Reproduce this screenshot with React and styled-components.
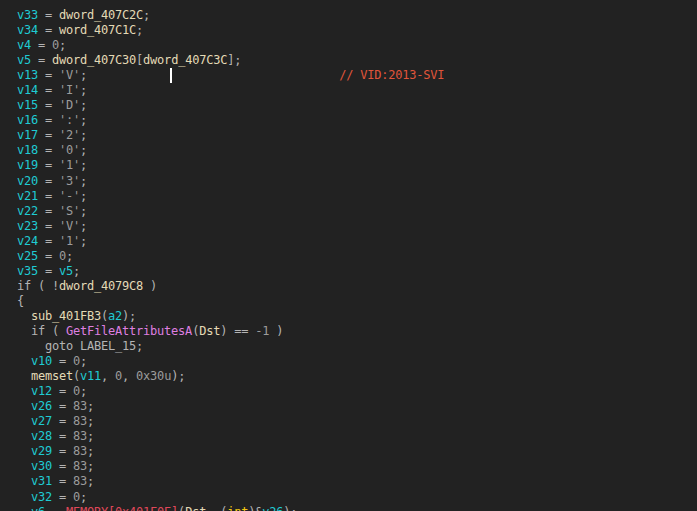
import React from "react";
import styled, { createGlobalStyle } from "styled-components";

const GlobalStyle = createGlobalStyle`
  html, body {
    margin: 0;
    padding: 0;
    background: #222222;
    overflow: hidden;
  }
`;

const Editor = styled.div`
  width: 697px;
  height: 511px;
  overflow: hidden;
  box-sizing: border-box;
  padding: 8px 0 0 17px;
  background: #222222;
  font-family: "DejaVu Sans Mono", "Liberation Mono", monospace;
  font-size: 12px;
  letter-spacing: -0.22px;
  color: #b4b4b4;
`;

const Line = styled.div`
  height: 15.06px;
  line-height: 15.06px;
  white-space: pre;
  padding-left: ${(p) => p.$indent * 7}px;
`;

const colors = {
  v: "#1fcbd3",
  n: "#9c9c9c",
  p: "#b4b4b4",
  g: "#e4dab6",
  f: "#df7fe0",
  c: "#e0553a",
  m: "#e0485a",
  k: "#f2c811",
};

const Tok = styled.span`
  color: ${(p) => colors[p.$kind]};
`;

const Caret = styled.span`
  display: inline-block;
  width: 2px;
  height: 15px;
  margin: 0 -1px;
  vertical-align: top;
  background: #ffffff;
`;

const v = (t) => ["v", t];
const n = (t) => ["n", t];
const p = (t) => ["p", t];
const g = (t) => ["g", t];

const assignChar = (name, ch) => [v(name), p(" = "), n(`'${ch}'`), p(";")];
const assignNum = (name, num) => [v(name), p(" = "), n(num), p(";")];

const lines = [
  [0, [v("v33"), p(" = "), g("dword_407C2C"), p(";")]],
  [0, [v("v34"), p(" = "), g("word_407C1C"), p(";")]],
  [0, assignNum("v4", "0")],
  [0, [v("v5"), p(" = "), g("dword_407C30"), p("["), g("dword_407C3C"), p("];")]],
  [0, [...assignChar("v13", "V"), p("            "), ["caret", ""], p("                        "), ["c", "// VID:2013-SVI"]]],
  [0, assignChar("v14", "I")],
  [0, assignChar("v15", "D")],
  [0, assignChar("v16", ":")],
  [0, assignChar("v17", "2")],
  [0, assignChar("v18", "0")],
  [0, assignChar("v19", "1")],
  [0, assignChar("v20", "3")],
  [0, assignChar("v21", "-")],
  [0, assignChar("v22", "S")],
  [0, assignChar("v23", "V")],
  [0, assignChar("v24", "1")],
  [0, assignNum("v25", "0")],
  [0, [v("v35"), p(" = "), v("v5"), p(";")]],
  [0, [p("if ( !"), g("dword_4079C8"), p(" )")]],
  [0, [p("{")]],
  [2, [g("sub_401FB3"), p("("), v("a2"), p(");")]],
  [2, [p("if ( "), ["f", "GetFileAttributesA"], p("("), g("Dst"), p(") == "), n("-1"), p(" )")]],
  [4, [p("goto LABEL_15;")]],
  [2, assignNum("v10", "0")],
  [2, [g("memset"), p("("), v("v11"), p(", "), n("0"), p(", "), n("0x30u"), p(");")]],
  [2, assignNum("v12", "0")],
  [2, assignNum("v26", "83")],
  [2, assignNum("v27", "83")],
  [2, assignNum("v28", "83")],
  [2, assignNum("v29", "83")],
  [2, assignNum("v30", "83")],
  [2, assignNum("v31", "83")],
  [2, assignNum("v32", "0")],
  [2, [v("v6"), p(" = "), ["m", "MEMORY[0x401F0E]"], p("("), g("Dst"), p(", ("), ["k", "int"], p(")&"), v("v26"), p(");")]],
];

export default function App() {
  return (
    <>
      <GlobalStyle />
      <Editor>
        {lines.map(([indent, toks], i) => (
          <Line key={i} $indent={indent}>
            {toks.map(([kind, text], j) =>
              kind === "caret" ? (
                <Caret key={j} />
              ) : (
                <Tok key={j} $kind={kind}>
                  {text}
                </Tok>
              )
            )}
          </Line>
        ))}
      </Editor>
    </>
  );
}
